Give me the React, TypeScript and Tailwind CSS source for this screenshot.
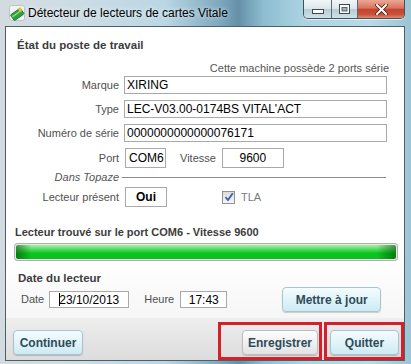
import React from "react";

function AppIcon() {
  return (
    <svg width="16" height="16" viewBox="0 0 16 16">
      <rect x="0.5" y="0.5" width="15" height="15" rx="2" fill="#eef4f2" stroke="#b7c6c8" />
      <g transform="rotate(-35 8 9)">
        <rect x="2" y="6" width="12" height="7" rx="1" fill="#2fa04a" stroke="#1c6f30" strokeWidth="0.8" />
        <rect x="2.5" y="8" width="11" height="1.3" fill="#9ad96a" />
      </g>
      <path d="M11 1.5 L12 3.5 L14 4 L12.3 5 L12.5 7 L11 5.8 L9.5 6.8 L10 5 L8.5 3.8 L10.4 3.5 Z" fill="#f2c230" />
    </svg>
  );
}

function WindowControls() {
  return (
    <div className="flex h-[19px] border border-t-0 border-[#44525c] rounded-b-[5px] overflow-hidden shadow-[0_1px_0_rgba(255,255,255,0.6)]">
      <div className="w-[28px] h-full flex items-end justify-center pb-[4px] bg-[linear-gradient(to_bottom,#f1f6f8_0%,#dbe6ec_48%,#b9cbd5_52%,#cfe0e8_100%)] border-r border-[#5b6b76]">
        <svg width="12" height="5" viewBox="0 0 12 5">
          <rect x="0.5" y="0.5" width="11" height="4" fill="#fff" stroke="#3d4a54" />
        </svg>
      </div>
      <div className="w-[26px] h-full flex items-center justify-center bg-[linear-gradient(to_bottom,#f1f6f8_0%,#dbe6ec_48%,#b9cbd5_52%,#cfe0e8_100%)] border-r border-[#5b6b76]">
        <svg width="11" height="10" viewBox="0 0 11 10">
          <rect x="0.5" y="0.5" width="10" height="9" fill="#fff" stroke="#3d4a54" />
          <rect x="3" y="3.5" width="5" height="3.5" fill="#9fb3bf" stroke="#3d4a54" strokeWidth="0.8" />
        </svg>
      </div>
      <div className="w-[46px] h-full flex items-center justify-center bg-[linear-gradient(to_bottom,#eaa895_0%,#d9735d_45%,#c5432c_52%,#c9503a_80%,#e08a70_100%)]">
        <svg width="13" height="11" viewBox="0 0 13 11">
          <path d="M2 1 L11 10 M11 1 L2 10" stroke="#4a1d16" strokeWidth="3.6" strokeLinecap="square" />
          <path d="M2 1 L11 10 M11 1 L2 10" stroke="#fff" strokeWidth="2" strokeLinecap="square" />
        </svg>
      </div>
    </div>
  );
}

function Field({ children, className }: { children?: React.ReactNode; className: string }) {
  return (
    <div className={"border border-[#a9a9a9] bg-white text-[12px] text-black flex items-center " + className}>
      {children}
    </div>
  );
}

const cyanBtn =
  "h-[25px] rounded-[4px] border border-[#aac3cc] bg-[linear-gradient(to_bottom,#f5fcfe_0%,#e1f4f9_50%,#cdebf3_100%)] shadow-[0_1px_1px_rgba(0,0,0,0.18)] text-[12px] font-bold text-[#2e4b5a] flex items-center justify-center";

export default function App() {
  return (
    <div className="w-[411px] h-[364px] overflow-hidden flex flex-col font-['Liberation_Sans',Arial,sans-serif] bg-[linear-gradient(90deg,#d3dbe0_0%,#cfdde4_15%,#bad7e4_40%,#80aac0_53%,#6590a8_58%,#8dbdd0_64%,#acd4e2_74%,#b8dbe6_90%,#9cc4d4_100%)]">
      {/* title bar */}
      <div className="h-[26px] flex items-start shrink-0">
        <div className="flex items-center h-[26px] pl-[9px] gap-[3px]">
          <AppIcon />
          <span className="text-[12px] text-black [text-shadow:0_0_5px_rgba(255,255,255,0.95)]">
            Détecteur de lecteurs de cartes Vitale
          </span>
        </div>
        <div className="ml-auto mr-[6px]">
          <WindowControls />
        </div>
      </div>

      {/* client area */}
      <div className="ml-[5px] mr-[6px] mb-[3px] h-[335px] border border-[#4f5f6a] flex flex-col bg-[linear-gradient(to_bottom,#ffffff_0%,#ffffff_70%,#f6f6f6_87%)]">
        <div className="mt-[9px] h-[20px] pl-[11px] flex items-center text-[11.5px] font-bold text-[#3c3c3c]">
          État du poste de travail
        </div>
        <div className="mt-[5px] h-[14px] pr-[15px] flex items-center justify-end text-[11px] text-[#555]">
          Cette machine possède 2 ports série
        </div>

        <div className="mt-[1px] h-[18px] flex items-center">
          <span className="w-[113px] text-right text-[11px] text-[#505050]">Marque</span>
          <Field className="ml-[5px] w-[263px] h-[18px] pl-[2px]">XIRING</Field>
        </div>
        <div className="mt-[6px] h-[18px] flex items-center">
          <span className="w-[113px] text-right text-[11px] text-[#505050]">Type</span>
          <Field className="ml-[5px] w-[263px] h-[18px] pl-[2px]">LEC-V03.00-0174BS VITAL'ACT</Field>
        </div>
        <div className="mt-[6px] h-[18px] flex items-center">
          <span className="w-[113px] text-right text-[11px] text-[#505050]">Numéro de série</span>
          <Field className="ml-[5px] w-[263px] h-[18px] pl-[2px]">0000000000000076171</Field>
        </div>

        <div className="mt-[6px] h-[20px] flex items-center">
          <span className="w-[113px] text-right text-[11px] text-[#505050]">Port</span>
          <Field className="ml-[6px] w-[41px] h-[20px] pl-[3px]">COM6</Field>
          <span className="ml-[14px] text-[11px] text-[#505050]">Vitesse</span>
          <Field className="ml-[6px] w-[62px] h-[20px] justify-center">9600</Field>
        </div>

        <div className="mt-[2px] h-[14px] flex items-center">
          <span className="w-[113px] text-right text-[11px] italic text-[#555]">Dans Topaze</span>
          <div className="ml-[3px] w-[264px] h-px bg-[#8a8a8a]" />
        </div>

        <div className="mt-[3px] h-[20px] flex items-center">
          <span className="w-[113px] text-right text-[11px] text-[#505050]">Lecteur présent</span>
          <Field className="ml-[6px] w-[42px] h-[20px] justify-center font-bold">Oui</Field>
          <div className="ml-[55px] w-[13px] h-[13px] border border-[#8f9192] bg-[linear-gradient(to_bottom,#dcdcdc,#f7f7f7)] flex items-center justify-center">
            <svg width="10" height="10" viewBox="0 0 10 10">
              <path d="M1.5 5.2 L4 8 L8.8 1.2" fill="none" stroke="#3f5fae" strokeWidth="1.8" />
            </svg>
          </div>
          <span className="ml-[6px] text-[11px] text-[#7a7a7a]">TLA</span>
        </div>

        <div className="mt-[18px] h-[14px] pl-[9px] flex items-center text-[11px] font-bold text-[#3c3c3c]">
          Lecteur trouvé sur le port COM6 - Vitesse 9600
        </div>
        <div className="mt-[4px] ml-[8px] w-[384px] h-[18px] rounded-[3px] border border-[#b0b0b0] p-px bg-[#e8e8e8]">
          <div className="w-full h-full rounded-[2px] bg-[linear-gradient(to_right,rgba(0,70,0,0.55),rgba(0,70,0,0)_4%,rgba(0,70,0,0)_95%,rgba(0,70,0,0.55)),linear-gradient(to_bottom,#a8eea8_0%,#3bd44b_40%,#07c41d_60%,#0cc020_100%)]" />
        </div>

        <div className="mt-[11px] h-[14px] pl-[12px] flex items-center text-[11.5px] font-bold text-[#3c3c3c]">
          Date du lecteur
        </div>
        <div className="mt-[1px] h-[25px] pl-[15px] flex items-center">
          <span className="text-[11px] text-[#505050]">Date</span>
          <Field className="ml-[5px] w-[80px] h-[17px] justify-center">
            <span className="w-px h-[13px] bg-black" />
            <span className="-ml-px">23/10/2013</span>
          </Field>
          <span className="ml-[15px] text-[11px] text-[#505050]">Heure</span>
          <Field className="ml-[6px] w-[47px] h-[17px] justify-center">17:43</Field>
          <button className={cyanBtn + " ml-[55px] w-[99px]"}>Mettre à jour</button>
        </div>

        {/* bottom bar */}
        <div className="mt-[6px] flex-1 flex items-end bg-[linear-gradient(to_bottom,#eeeeee,#dcdcdc)]">
          <button className={cyanBtn + " ml-[7px] mb-[5px] w-[70px]"}>Continuer</button>
          <div className="ml-auto flex items-end gap-[2px]">
            <div className="w-[104px] h-[38px] border-[3px] border-[#d4202b] flex items-end justify-end pr-px pb-[2px]">
              <button className="w-[76px] h-[25px] rounded-[4px] border border-[#bdbdbd] bg-[linear-gradient(to_bottom,#fdfdfd,#f0f0f0_50%,#e2e2e2)] shadow-[0_1px_1px_rgba(0,0,0,0.18)] text-[12px] font-bold text-[#2e4b5a]">
                Enregistrer
              </button>
            </div>
            <div className="w-[80px] h-[38px] border-[3px] border-[#d4202b] flex items-end justify-end pr-[2px] pb-[2px]">
              <button className={cyanBtn + " w-[69px]"}>Quitter</button>
            </div>
          </div>
        </div>
      </div>
    </div>
  );
}
